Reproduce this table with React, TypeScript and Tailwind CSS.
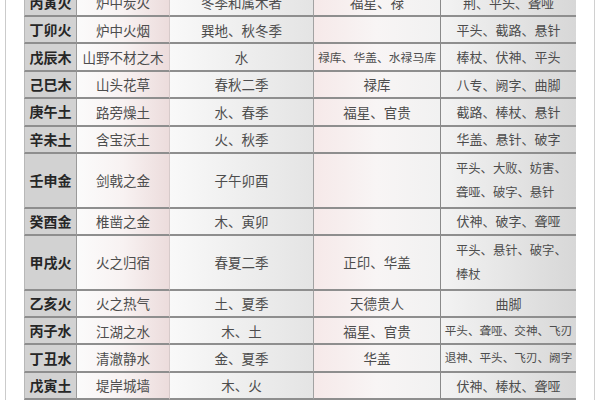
const FONT = "font-['Noto_Sans_CJK_SC','Noto_Sans',sans-serif]"

type Row = {
  gz: string
  nayin: string
  season: string
  star: string
  sha: string[]
  tall?: boolean
  tight?: boolean
  starTight?: boolean
}

const ROWS: Row[] = [
  { gz: "丙寅火", nayin: "炉中炭火", season: "冬季和属木者", star: "福星、禄", sha: ["荆、平头、聋哑"] },
  { gz: "丁卯火", nayin: "炉中火烟", season: "巽地、秋冬季", star: "", sha: ["平头、截路、悬针"] },
  { gz: "戊辰木", nayin: "山野不材之木", season: "水", star: "禄库、华盖、水禄马库", sha: ["棒杖、伏神、平头"], starTight: true },
  { gz: "己巳木", nayin: "山头花草", season: "春秋二季", star: "禄库", sha: ["八专、阙字、曲脚"] },
  { gz: "庚午土", nayin: "路旁燥土", season: "水、春季", star: "福星、官贵", sha: ["截路、棒杖、悬针"] },
  { gz: "辛未土", nayin: "含宝沃土", season: "火、秋季", star: "", sha: ["华盖、悬针、破字"] },
  { gz: "壬申金", nayin: "剑戟之金", season: "子午卯酉", star: "", sha: ["平头、大败、妨害、", "聋哑、破字、悬针"], tall: true },
  { gz: "癸酉金", nayin: "椎凿之金", season: "木、寅卯", star: "", sha: ["伏神、破字、聋哑"] },
  { gz: "甲戌火", nayin: "火之归宿", season: "春夏二季", star: "正印、华盖", sha: ["平头、悬针、破字、", "棒杖"], tall: true },
  { gz: "乙亥火", nayin: "火之热气", season: "土、夏季", star: "天德贵人", sha: ["曲脚"] },
  { gz: "丙子水", nayin: "江湖之水", season: "木、土", star: "福星、官贵", sha: ["平头、聋哑、交神、飞刃"], tight: true },
  { gz: "丁丑水", nayin: "清澈静水", season: "金、夏季", star: "华盖", sha: ["退神、平头、飞刃、阙字"], tight: true },
  { gz: "戊寅土", nayin: "堤岸城墙", season: "木、火", star: "", sha: ["伏神、棒杖、聋哑"] },
]

function ShaCell({ row }: { row: Row }) {
  if (row.sha.length > 1) {
    return (
      <div className="flex h-full flex-col justify-center gap-[6px] border-b-2 border-[#8e8e8e] bg-linear-to-r from-[#f3f3f3] to-[#d7d7d7] pl-[15px] text-[12.3px] leading-[18px]">
        {row.sha.map((l) => (
          <span key={l}>{l}</span>
        ))}
      </div>
    )
  }
  return (
    <div
      className={`flex h-full items-center justify-center border-b-2 border-[#8e8e8e] bg-linear-to-r from-[#f3f3f3] to-[#d7d7d7] ${
        row.tight ? "text-[11.6px]" : "text-[13px]"
      }`}
    >
      {row.sha[0]}
    </div>
  )
}

function TableRow({ row }: { row: Row }) {
  return (
    <div
      className={`grid grid-cols-[53px_93px_144px_127px_135px] ${row.tall ? "h-[56.6px]" : "h-[28.3px]"}`}
    >
      <div className="flex h-full items-center justify-center border-b-2 border-r border-l border-[#8e8e8e] border-l-[#b8b8b8] border-r-[#9a9a9a] bg-[#d2d2d2] text-[14px] font-bold text-[#262626]">
        {row.gz}
      </div>
      <div className="flex h-full items-center justify-center border-b-2 border-r border-[#8e8e8e] border-r-[#d6caca] bg-linear-to-r from-[#fbfbfb] via-[#f8f2f2] to-[#ecdcdc] text-[13.5px]">
        {row.nayin}
      </div>
      <div className="flex h-full items-center justify-center border-b-2 border-r border-[#8e8e8e] border-r-[#a2a2a2] bg-linear-to-r from-[#f9f9f9] to-[#e4e4e4] text-[13.5px]">
        {row.season}
      </div>
      <div
        className={`flex h-full items-center justify-center border-b-2 border-r border-[#8e8e8e] border-r-[#8a8a8a] bg-linear-to-r from-[#f6e9e9] via-[#f8f5f5] to-[#f1f1f1] ${
          row.starTight ? "text-[11.8px]" : "text-[13.5px]"
        }`}
      >
        {row.star}
      </div>
      <ShaCell row={row} />
    </div>
  )
}

export default function App() {
  return (
    <div className={`flex h-[400px] w-[600px] overflow-hidden bg-white text-[#4d4d4d] ${FONT}`}>
      <div className="ml-[5px] h-full w-[19px] border-l border-[#cbcbcb]" />
      <div className="-mt-[10.3px] flex w-[553px] flex-col">
        {ROWS.map((r) => (
          <TableRow key={r.gz} row={r} />
        ))}
      </div>
      <div className="ml-[17px] h-full border-l border-[#d0d0d0]" />
    </div>
  )
}
